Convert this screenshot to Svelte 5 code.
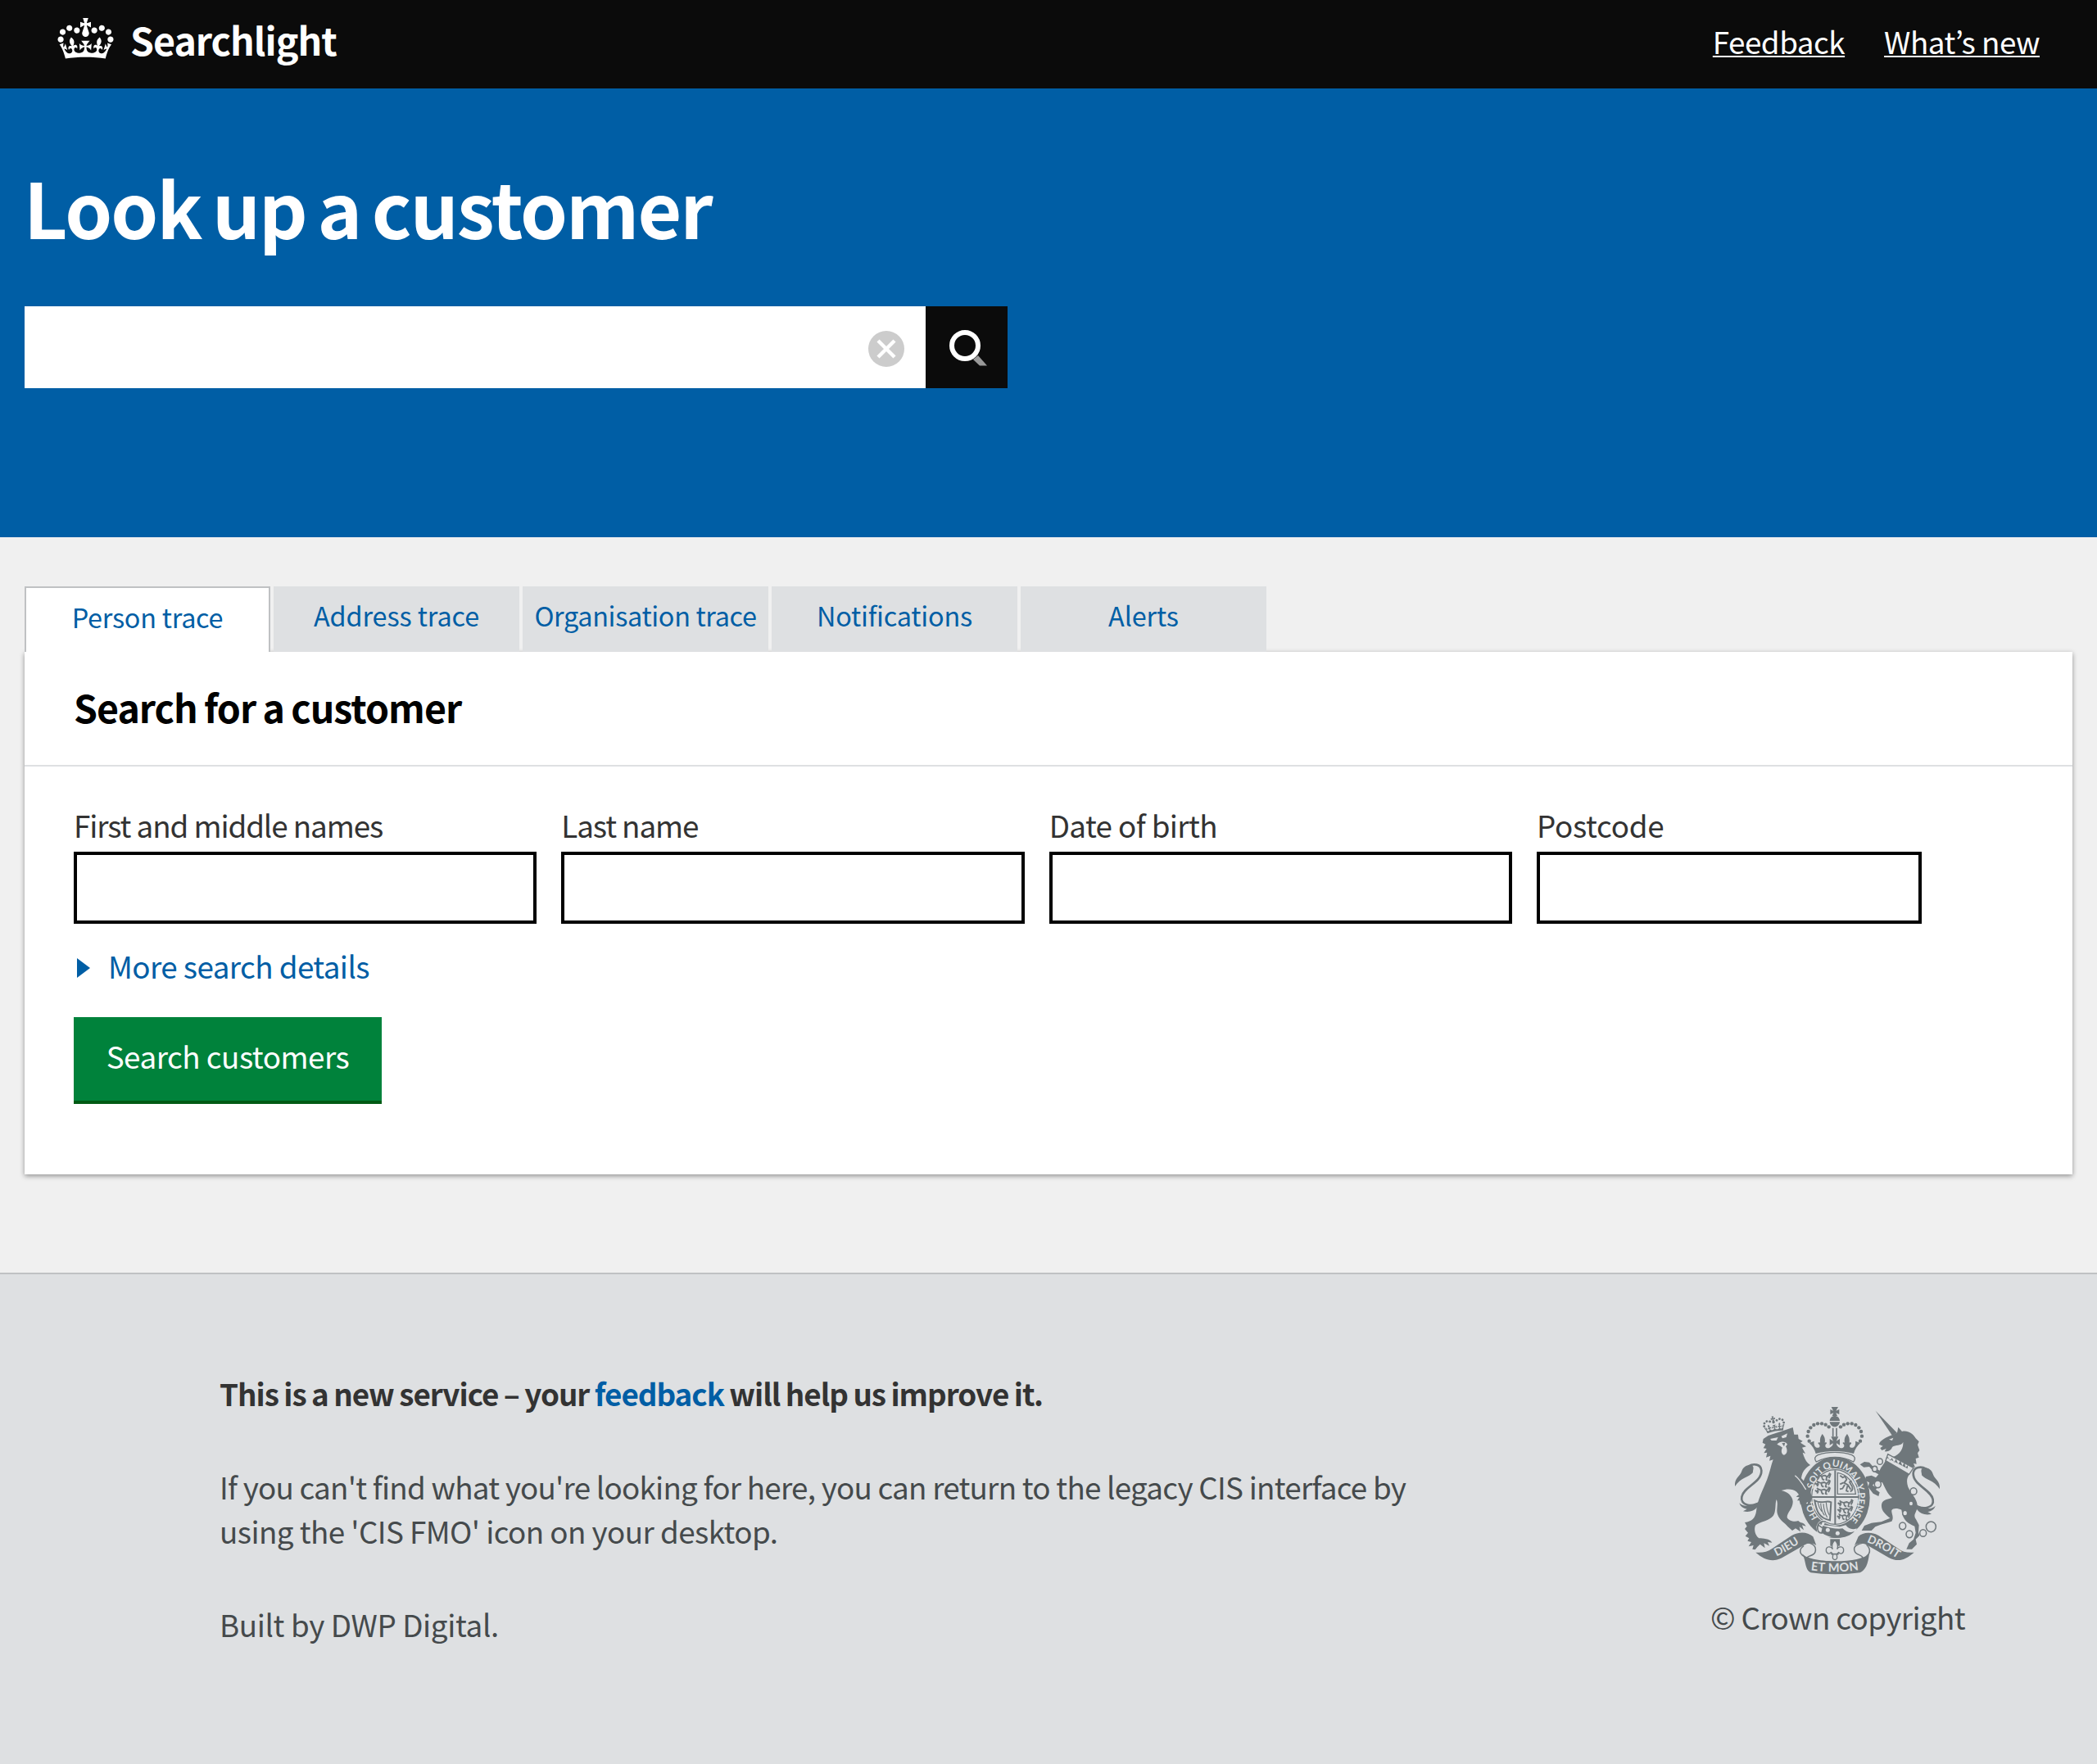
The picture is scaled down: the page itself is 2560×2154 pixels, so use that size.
<script>
  const tabs = [
    { label: 'Person trace', name: 'person', active: true },
    { label: 'Address trace', name: 'address', active: false },
    { label: 'Organisation trace', name: 'organisation', active: false },
    { label: 'Notifications', name: 'notifications', active: false },
    { label: 'Alerts', name: 'alerts', active: false }
  ];

  const fields = [
    { id: 'names', label: 'First and middle names' },
    { id: 'surname', label: 'Last name' },
    { id: 'birth', label: 'Date of birth' },
    { id: 'postcode', label: 'Postcode' }
  ];

  // Pearls of the left arch of the royal crown; the right arch mirrors them.
  const pearls = [
    [386, 178], [380, 160], [383, 143], [391, 129], [403, 119], [417, 114], [432, 114], [446, 118], [458, 126]
  ];

  // Links of the unicorn's chain.
  const chain = [
    [645, 253, 10], [626, 280, 9], [637, 336, 12], [768, 362, 12], [759, 407, 8],
    [737, 442, 9], [728, 489, 12], [753, 519, 12], [803, 515, 12], [832, 492, 18]
  ];

  // Motto of the garter: word and its place along the ring.
  const motto = [
    ['HOI', '17.5%'], ['SOIT', '36.2%'], ['QUI', '48.6%'], ['MAL', '60.4%'], ['Y', '69.4%'], ['PENSE', '81%']
  ];
</script>

{#snippet crownShape()}
  <path d="M25 30.2c3.5 1.5 7.7-.2 9.1-3.7 1.5-3.6-.2-7.8-3.9-9.2-3.6-1.4-7.6.3-9.1 3.9-1.4 3.5.3 7.5 3.9 9zM9 39.5c3.6 1.5 7.8-.2 9.2-3.7 1.5-3.6-.2-7.8-3.9-9.1-3.6-1.5-7.6.2-9.1 3.8-1.4 3.5.3 7.5 3.8 9zM4.4 57.2c3.5 1.5 7.7-.2 9.1-3.8 1.5-3.6-.2-7.7-3.9-9.1-3.5-1.5-7.6.3-9.1 3.8-1.4 3.5.3 7.6 3.9 9.1zm38.3-21.4c3.5 1.5 7.7-.2 9.1-3.8 1.5-3.6-.2-7.7-3.9-9.1-3.6-1.5-7.6.3-9.1 3.8-1.3 3.6.4 7.7 3.9 9.1zm64.4-5.6c-3.6 1.5-7.8-.2-9.1-3.7-1.5-3.6.2-7.8 3.8-9.2 3.6-1.4 7.7.3 9.2 3.9 1.3 3.5-.4 7.5-3.9 9zm15.9 9.3c-3.6 1.5-7.7-.2-9.1-3.7-1.5-3.6.2-7.8 3.7-9.1 3.6-1.5 7.7.2 9.2 3.8 1.5 3.5-.3 7.5-3.8 9zm4.7 17.7c-3.6 1.5-7.8-.2-9.2-3.8-1.5-3.6.2-7.7 3.9-9.1 3.6-1.5 7.7.3 9.2 3.8 1.3 3.5-.4 7.6-3.9 9.1zM89.3 35.8c-3.6 1.5-7.8-.2-9.2-3.8-1.4-3.6.2-7.7 3.9-9.1 3.6-1.5 7.7.3 9.2 3.8 1.4 3.6-.3 7.7-3.9 9.1zM69.7 17.7l8.9 4.7V9.3l-8.9 2.8c-.2-.3-.5-.6-.9-.9L72.4 0H59.6l3.5 11.2c-.3.3-.6.5-.9.9l-8.8-2.8v13.1l8.8-4.7c.3.3.6.7.9.9l-5 15.4v.1c-.2.8-.4 1.6-.4 2.4 0 4.1 3.1 7.5 7 8.1h.2c.3 0 .7.1 1 .1.4 0 .7 0 1-.1h.2c4-.6 7.1-4.1 7.1-8.1 0-.8-.1-1.7-.4-2.4V34l-5.1-15.4c.4-.2.7-.6 1-.9zM66 92.8c16.9 0 32.8 1.1 47.1 3.2 4-16.9 8.9-26.7 14-33.5l-9.6-3.4c1 4.9 1.1 7.2 0 10.2-1.5-1.4-3-4.3-4.2-8.7L108.6 76c2.8-2 5-3.2 7.5-3.3-4.4 9.4-10 11.9-13.6 11.2-4.3-.8-6.3-4.6-5.6-7.9 1-4.7 5.7-5.9 8-.5 4.3-8.7-3-11.4-7.6-8.8 7.1-7.2 7.9-13.5 2.1-21.1-8 6.1-8.1 12.3-4.5 20.8-4.7-5.4-12.1-2.5-9.5 6.2 3.4-5.2 7.9-2 7.2 3.1-.6 4.3-6.4 7.8-13.5 7.2-10.3-.9-10.9-8-11.2-13.8 2.5-.5 7.1 1.8 11 7.3L80.2 60c-4.1 4.4-8 5.3-12.3 5.4 1.4-4.4 8-11.6 8-11.6H55.5s6.4 7.2 7.9 11.6c-4.2-.1-8-1-12.3-5.4l1.4 16.4c3.9-5.5 8.5-7.7 10.9-7.3-.3 5.8-.9 12.8-11.1 13.8-7.2.6-12.9-2.9-13.5-7.2-.7-5 3.8-8.3 7.1-3.1 2.7-8.7-4.6-11.6-9.4-6.2 3.7-8.5 3.6-14.7-4.6-20.8-5.8 7.6-5 13.9 2.2 21.1-4.7-2.6-11.9.1-7.7 8.8 2.3-5.5 7.1-4.2 8.1.5.7 3.3-1.3 7.1-5.7 7.9-3.5.7-9-1.8-13.5-11.2 2.5.1 4.7 1.3 7.5 3.3l-4.7-15.4c-1.2 4.4-2.7 7.2-4.3 8.7-1.1-3-.9-5.3 0-10.2l-9.5 3.4c5 6.9 9.9 16.7 14 33.5 14.8-2.1 30.8-3.2 47.7-3.2z" />
{/snippet}

{#snippet tail()}
  <path class="line tail" d="M212 400C172 424 133 412 139 382C146 345 212 330 211 286C209 262 182 259 164 270" />
  <path d="M114 344C112 312 132 310 139 288C144 270 164 262 178 268C186 275 178 288 180 293C168 309 134 312 114 344Z" />
  <path d="M130 405C146 422 172 416 208 399L196 420C184 434 166 441 144 435L158 427C144 425 134 418 130 405Z" />
{/snippet}

{#snippet shieldLion()}
  <path class="line beast" d="M2 16l5 5 8-8 8 3 12-3 9 5 7-8 4 3-5 10M14 19l-5 9M24 18l3 9 6 3M42 20l-2 9 6 2M8 8l6 5M50 4l8 6" />
{/snippet}

<div class="page">
  <header class="masthead">
    <a class="brand" href="#home">
      <svg class="brand-crown" viewBox="0 0 132 97" aria-hidden="true">{@render crownShape()}</svg>
      <span class="brand-name">Searchlight</span>
    </a>
    <nav class="links">
      <a href="#feedback">Feedback</a>
      <a href="#news">What’s new</a>
    </nav>
  </header>

  <section class="hero">
    <h1>Look up a customer</h1>
    <form class="lookup">
      <div class="lookup-field">
        <input class="lookup-input" aria-label="Look up a customer" />
        <button class="clear" type="button" aria-label="Clear">
          <svg viewBox="0 0 44 44"><circle cx="22" cy="22" r="22" fill="#ccc" /><path d="M12 12l20 20M32 12l-20 20" stroke="#fff" stroke-width="4.4" /></svg>
        </button>
      </div>
      <button class="go" type="button" aria-label="Search">
        <svg viewBox="0 0 46 44"><path d="M29 36l6-5 11 12.500h-9z" fill="#999" /><circle cx="19" cy="19" r="16" fill="none" stroke="#fff" stroke-width="6" /></svg>
      </button>
    </form>
  </section>

  <main class="content">
    <div class="tabs">
      {#each tabs as tab}
        <a class="tab {tab.name}" class:active={tab.active} href="#trace">{tab.label}</a>
      {/each}
    </div>

    <section class="card">
      <h2>Search for a customer</h2>
      <form class="search">
        <div class="fields">
          {#each fields as field}
            <div class="field">
              <label class={field.id} for={field.id}>{field.label}</label>
              <input id={field.id} class:short={field.id === 'postcode'} />
            </div>
          {/each}
        </div>
        <a class="more" href="#more">
          <svg viewBox="0 0 16 24" aria-hidden="true"><path d="M0 0l16 12L0 24z" fill="#005ea5" /></svg>
          <span>More search details</span>
        </a>
        <button class="submit" type="button">Search customers</button>
      </form>
    </section>
  </main>

  <footer class="footer">
    <div class="notes">
      <h3>This is a new service – your <a href="#feedback">feedback</a> will help us improve it.</h3>
      <p><span class="long">If you can't find what you're looking for here, you can return to the legacy CIS interface by</span><br />using the 'CIS FMO' icon on your desktop.</p>
      <p class="built">Built by DWP Digital.</p>
    </div>

    <div class="copyright">
      <svg class="crest" viewBox="114 50 750 618" aria-hidden="true">
        <defs>
          <path id="garter" d="M481 496A97 113 0 0 1 481 272A97 113 0 0 1 481 496" />
          <path id="dieu" d="M255 605Q302 585 361 545" />
          <path id="droit" d="M590 545Q650 568 714 612" />
          <path id="etmon" d="M386 650Q480 664 574 649" />
        </defs>

        <!-- tails -->
        {@render tail()}
        <g transform="matrix(-1 0 0 1 978 10)">{@render tail()}</g>

        <!-- garter ring -->
        <ellipse cx="481" cy="385" rx="127" ry="148" />
        <ellipse class="pale" cx="481" cy="383" rx="91" ry="105" />
        <ellipse class="line" cx="481" cy="383" rx="86" ry="100" stroke-width="3.500" />
        <g class="motto">
          {#each motto as [word, place]}
            <text><textPath href="#garter" startOffset={place}>{word}</textPath></text>
          {/each}
        </g>

        <!-- quartered shield -->
        <path class="line" d="M481 285V482M394 383H568" stroke-width="6" />
        <g transform="translate(408 291)">{@render shieldLion()}</g>
        <g transform="translate(406 316)">{@render shieldLion()}</g>
        <g transform="translate(406 342)">{@render shieldLion()}</g>
        <g transform="translate(489 388)">{@render shieldLion()}</g>
        <g transform="translate(488 412)">{@render shieldLion()}</g>
        <g transform="translate(487 436) scale(.85 1)">{@render shieldLion()}</g>
        <path class="line" d="M490 294C524 300 552 330 556 372H490Z" stroke-width="4" />
        <path class="line beast" d="M499 304l10 8 8-5 6 12-9 12 14 8 10 16M512 330l-13 6M516 338l-8 14-10 2M526 342l-4 18 8 3M536 362c12-2 10-18 2-26l-4-8 8-4" />
        <path class="line" d="M406 396C412 430 420 462 462 468L466 402C446 392 438 412 406 396Z" stroke-width="6" />
        <path class="line" d="M418 404Q422 424 432 436M428 406Q430 434 442 450M438 408Q440 438 452 458M448 402Q450 432 460 450" stroke-width="3.500" />

        <!-- buckle and strap end -->
        <path class="pale" d="M412 492C418 470 436 462 446 470L440 486L498 492L520 486C530 500 545 504 560 498L552 530H418Z" />
        <path d="M436 488C462 496 490 502 508 498C528 516 538 514 552 508C536 526 510 534 482 532C462 530 444 524 430 512Z" />
        <path class="line" d="M446 474C424 466 410 490 420 510C426 518 440 516 446 504M416 484l22 14M434 470l-6 14" stroke-width="5" />
        <circle class="pale" cx="454" cy="504" r="7.5" />
        <circle class="pale" cx="490" cy="516" r="7.5" />

        <!-- royal crown -->
        {#each pearls as [x, y]}
          <circle cx={x} cy={y} r="6.6" />
          <circle cx={959 - x} cy={y} r="6.6" />
        {/each}
        <path d="M467 53H492L484 67L496 62V80L484 75L489 86H470L475 75L463 80V62L474 67Z" />
        <path d="M461 104C462 92 470 86 479.500 86C489 86 497 92 498 104Z" />
        <path d="M461 108H498C497 118 489 126 479.500 126C470 126 462 118 461 108Z" />
        <path class="line" d="M473 130V162M486 130V162" stroke-width="5" />
        <path d="M386 185L404 178C402 190 406 200 414 202C424 204 428 196 422 190C416 188 418 180 426 184C424 170 428 160 434 152C441 160 446 170 443 184C452 180 452 188 446 190C442 200 450 206 460 203C470 198 474 192 473 186L461 193V170L474 178L466 162H493L485 178L498 170V193L486 186C485 192 491 200 499 203C509 206 517 200 513 190C507 188 507 180 516 184C513 170 518 160 525 152C531 160 535 170 533 184C541 180 543 188 537 190C531 196 535 204 545 202C553 200 557 190 555 178L573 185C562 196 553 208 549 224C506 212 452 212 410 224C406 208 397 196 386 185Z" />
        <path class="pale edge" d="M418 229C456 216 504 216 542 229C554 234 556 244 548 254C506 232 454 232 412 254C404 244 406 234 418 229Z" />

        <!-- lion -->
        <g transform="translate(211 95) rotate(-11) scale(.62 .6)">{@render crownShape()}</g>
        <path d="M236 158L300 137L326 128L331 154L345 154L347 170L362 178L354 184L375 198L360 202L372 224L362 220C368 240 374 256 390 266C372 276 360 290 357 314C372 330 384 346 390 366L397 384L390 404L382 414L380 398L372 412L366 398L354 412L350 396L342 396L350 384L338 382L348 374L340 364C326 352 304 352 284 359C306 364 324 378 326 398C328 424 304 440 305 458C310 470 332 476 346 470C354 480 366 474 374 490L360 486L366 504L350 492L354 510L336 498L324 506L308 492C296 476 278 470 270 446C264 428 274 408 266 392C260 410 266 434 254 452C240 470 204 474 190 486C182 500 188 524 202 534C216 534 242 536 250 550L234 548L240 562L220 552L224 570L206 556L196 566L188 576L178 574L182 560L164 564L174 548L160 544L166 534L152 526L162 514L150 500L158 490L150 476C176 472 188 460 192 436C196 392 216 360 232 318C242 292 246 268 254 246L240 250L244 232L228 238L232 220L220 222L230 206L218 204L226 190L215 184L218 170Z" />
        <path class="pale" d="M243 170L272 164L266 176L248 176ZM284 160L306 150L302 164L288 168Z" />
        <path class="pale" d="M268 190C280 176 300 178 306 190L300 198C308 210 306 226 294 229C284 226 282 212 288 202L280 196Z" />
        <path d="M286 186l12-2-4 14z" />
        <path class="pale-line" d="M334 304C352 318 362 336 374 356" />

        <!-- unicorn -->
        <path d="M629 67L708 148L690 158Z" />
        <path d="M712 127L726 143C746 138 766 150 776 168L788 180L783 192L790 212L783 222L788 238L776 242L779 262L768 260L774 274L760 272L676 236C706 240 732 214 730 182C722 198 702 190 690 200C688 210 676 218 662 216L668 206L652 212L646 204L656 196L642 190C644 176 668 164 690 156L708 148Z" />
        <path class="pale" d="M678 172l16-6-4 10z" />
        <path d="M668 238L756 296C742 312 742 328 748 346C760 372 780 388 782 412C784 440 762 446 778 466L788 486L786 512L790 524L776 538L780 556L762 574H742L752 552L768 538L776 514L772 490C750 480 728 470 724 430C712 424 692 422 688 432C686 444 698 456 688 472L648 484L628 492L614 506H578L588 488L614 478L650 474L682 460C664 446 646 430 652 406C658 392 678 390 690 386C672 372 664 350 654 330C640 328 624 330 618 340L634 350L630 356L644 366L640 380L620 370L602 346L606 330L590 322L594 308L614 304L630 312L640 300L622 290L606 272L586 274L572 264L588 254L606 256L622 274L644 286C650 268 664 262 668 238Z" />
        <path class="pale edge" d="M674 226L768 276L752 300L666 250Z" />
        <path d="M674 236l9 14 6-11 8 18 7-14 8 20 8-14 7 20 8-13 4 18 9-9-2 14-76-40z" />
        {#each chain as [x, y, r]}
          <ellipse class="link" cx={x} cy={y} rx={r} ry={r + 1} />
        {/each}

        <!-- motto ribbons -->
        <path d="M190 586C216 588 232 584 250 572L322 524C346 510 378 508 400 528L412 560C398 550 382 550 366 560L286 606C250 624 220 612 190 586Z" />
        <path d="M770 586C744 588 728 584 712 572L640 524C616 510 582 510 566 528L552 560C564 550 582 550 596 558L676 604C712 624 740 612 770 586Z" />
        <path d="M358 588C372 608 420 618 481 618C542 618 590 608 606 590C602 628 592 652 572 660C520 668 440 668 392 660C368 650 376 612 358 588Z" />
        <path class="line" d="M366 562C348 574 350 590 366 600M372 548C400 552 414 564 408 584C404 600 380 596 378 606M596 558C612 574 610 590 596 600M590 550C562 554 546 564 552 580C556 598 580 592 582 606" stroke-width="4.500" />
        <g class="bands">
          <text><textPath href="#dieu" startOffset="50%">DIEU</textPath></text>
          <text><textPath href="#droit" startOffset="50%">DROIT</textPath></text>
          <text class="wide"><textPath href="#etmon" startOffset="50%">ET MON</textPath></text>
        </g>

        <!-- fleur-de-lis badge -->
        <path d="M463 537H498V562H463Z" />
        <path class="pale edge" d="M480 541C470 552 466 562 472 574C466 562 448 562 448 578C448 590 460 594 466 586C472 590 474 596 472 602C470 616 490 616 488 602C486 596 488 590 494 586C500 594 512 590 512 578C512 562 494 562 488 574C494 562 490 552 480 541Z" />
        <path class="line" d="M466 592H494" stroke-width="5" />
      </svg>
      <a href="#copyright">© Crown copyright</a>
    </div>
  </footer>
</div>

<style>
  :global(body) { margin: 0; background: #dee0e2; }

  .page {
    width: 2560px;
    min-height: 2154px;
    display: flex;
    flex-direction: column;
    background: #f0f0f0;
    font-family: 'Noto Sans CJK JP', 'Noto Sans', sans-serif;
    font-size: 36.8px;
  }
  .page * { box-sizing: border-box; }
  a { color: #005ea5; text-decoration: none; }
  h1, h2, h3, p { margin: 0; }
  button { border: 0; padding: 0; font: inherit; }
  svg { display: block; }

  .masthead {
    height: 108px;
    padding: 0 70px;
    display: flex;
    justify-content: space-between;
    background: #0b0b0b;
  }
  .brand { display: flex; color: #fff; }
  .brand-crown { width: 69px; height: 50px; margin-top: 22px; fill: #fff; }
  .brand-name {
    margin-left: 20px;
    font-size: 46.5px;
    font-weight: 700;
    line-height: 96px;
    letter-spacing: -1px;
  }
  .links { display: flex; gap: 48px; line-height: 101px; letter-spacing: -0.5px; }
  .links a {
    color: #fff;
    text-decoration: underline;
    text-decoration-thickness: 2px;
    text-underline-offset: 2px;
    text-decoration-skip-ink: none;
  }

  .hero { height: 548px; padding: 84px 30px 0; background: #005ea5; }
  h1 {
    color: #fff;
    font-size: 92.7px;
    font-weight: 700;
    line-height: 120px;
    letter-spacing: -1.95px;
    word-spacing: -5.5px;
    text-indent: -1px;
  }
  .lookup { display: flex; width: 1200px; height: 100px; margin-top: 62px; }
  .lookup-field { flex: 1; display: flex; align-items: center; padding-right: 26px; background: #fff; }
  .lookup-input { flex: 1; height: 100%; padding: 0 20px; border: 0; background: none; font: inherit; }
  .clear { width: 44px; height: 44px; margin-top: 4px; background: none; }
  .go { width: 100px; padding: 29px 0 0 29px; background: #0b0b0b; }
  .go svg { width: 46px; height: 44px; margin-bottom: 27px; }

  .content { padding: 60px 30px 120px; }
  .tabs { display: flex; gap: 4px; height: 80px; }
  .tab {
    width: 300px;
    background: #dee0e2;
    font-size: 32.4px;
    line-height: 69px;
    letter-spacing: -0.1px;
    text-align: center;
    white-space: nowrap;
  }
  .tab.active { border: 2px solid #bfc1c3; border-bottom: 0; background: #fff; }
  .tab.person { letter-spacing: -0.25px; }
  .tab.organisation { letter-spacing: -0.34px; }
  .tab.notifications { letter-spacing: -0.2px; }

  .card { height: 638px; background: #fff; box-shadow: 0 2px 6px rgba(0, 0, 0, 0.4); }
  h2 {
    height: 140px;
    padding-left: 60px;
    border-bottom: 2px solid #dee0e2;
    color: #000;
    font-size: 46.5px;
    font-weight: 700;
    line-height: 133px;
    letter-spacing: -1px;
    word-spacing: -1.3px;
  }
  .search { padding: 46px 60px 0; }
  .fields { display: grid; grid-template-columns: repeat(4, 565.33px); column-gap: 30px; }
  .field { display: flex; flex-direction: column; }
  label { height: 58px; color: #333; line-height: 50px; letter-spacing: -1.09px; }
  .birth { letter-spacing: -0.62px; }
  .postcode { letter-spacing: -0.3px; }
  .field input { height: 88px; padding: 0 10px; border: 4px solid #000; border-radius: 0; background: #fff; font: inherit; }
  .field .short { width: 470px; }
  .more { display: flex; align-items: flex-start; width: max-content; height: 48px; margin-top: 30px; line-height: 43px; letter-spacing: -0.58px; }
  .more svg { width: 16px; height: 24px; margin: 12px 22px 0 4px; }
  .submit {
    display: block;
    width: 376px;
    height: 106px;
    margin-top: 36px;
    padding-bottom: 9px;
    border-bottom: 4px solid #005a14;
    background: #00823b;
    color: #fff;
    letter-spacing: -0.5px;
  }

  .footer {
    flex: 1;
    display: flex;
    justify-content: space-between;
    padding: 0 160px 0 268px;
    border-top: 2px solid #bfc1c3;
    background: #dee0e2;
    color: #454a4c;
    line-height: 54px;
  }
  .notes { padding-top: 118px; letter-spacing: -0.57px; }
  h3 {
    margin-bottom: 60px;
    color: #333;
    font-size: 36.8px;
    font-weight: 700;
    line-height: 54px;
    letter-spacing: -1.02px;
    word-spacing: -0.9px;
    white-space: nowrap;
  }
  p { white-space: nowrap; }
  .long { letter-spacing: -0.77px; }
  .built { margin-top: 60px; letter-spacing: -0.38px; }
  .copyright { width: 312px; padding-top: 161px; }
  .copyright a { display: block; margin-top: 24px; color: #454a4c; letter-spacing: -0.65px; white-space: nowrap; }

  .crest { width: 250px; height: 206px; margin-left: 30px; fill: #6f777b; overflow: visible; }
  .line { fill: none; stroke: #6f777b; }
  .tail { stroke-width: 8px; }
  .beast { stroke-width: 5.5px; stroke-linejoin: round; }
  .pale { fill: #dee0e2; }
  .edge { stroke: #6f777b; stroke-width: 4px; }
  .pale-line { fill: none; stroke: #dee0e2; stroke-width: 4px; }
  .link { fill: #dee0e2; stroke: #6f777b; stroke-width: 4.5px; }
  .motto, .bands { fill: #dee0e2; font-family: Lato, sans-serif; font-weight: 700; text-anchor: middle; letter-spacing: 0; }
  .motto { font-size: 35px; }
  .bands { font-size: 41px; }
  .wide { font-size: 44px; letter-spacing: 1px; }
</style>
